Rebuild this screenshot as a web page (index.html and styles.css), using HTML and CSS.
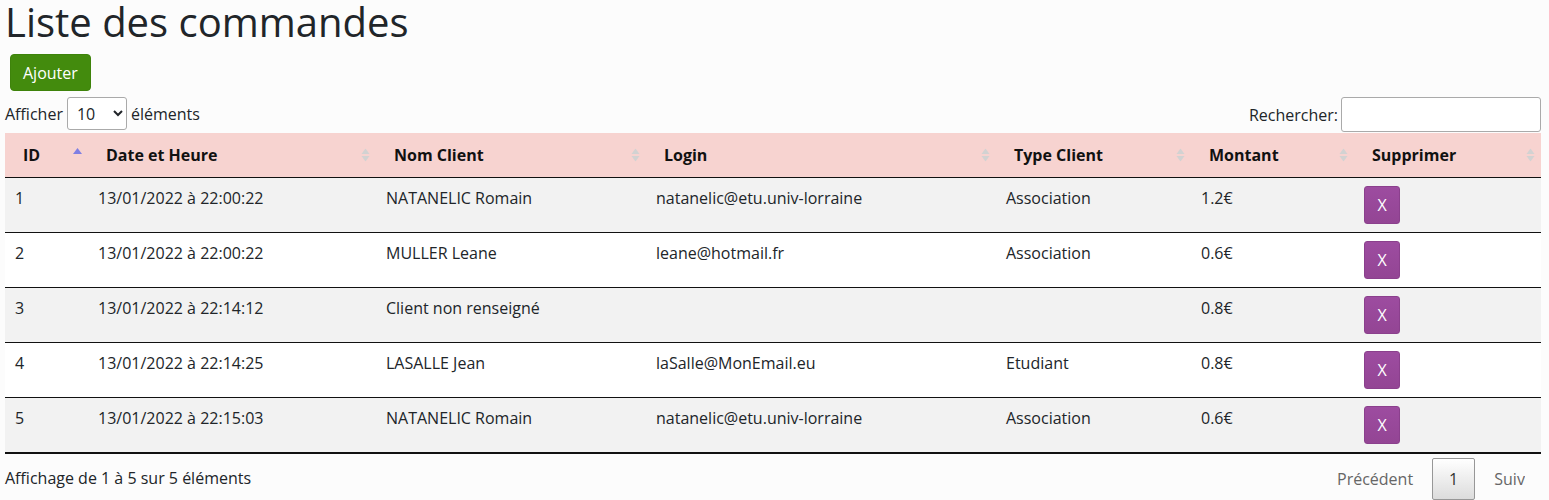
FILE: index.html
```html
<!DOCTYPE html>
<html lang="fr">
<head>
<meta charset="utf-8">
<title>Liste des commandes</title>
<link rel="stylesheet" href="styles.css">
</head>
<body>
<div class="page">
  <h1 class="title">Liste des commandes</h1>
  <button class="btn-add">Ajouter</button>

  <div class="controls">
    <label class="length">Afficher
      <select class="length-select"><option>10</option><option>25</option><option>50</option><option>100</option></select>
      éléments</label>
    <label class="search">Rechercher:<input class="search-input" type="search"></label>
  </div>

  <table class="grid">
    <colgroup>
      <col style="width:83px"><col style="width:288px"><col style="width:270px"><col style="width:350px"><col style="width:195px"><col style="width:163px"><col style="width:187px">
    </colgroup>
    <thead>
      <tr>
        <th>ID<span class="sort asc"><svg width="9" height="6" viewBox="0 0 9 6"><path d="M4.5 0 L9 6 L0 6 Z" fill="#7f7fe3"/></svg></span></th>
        <th>Date et Heure<span class="sort"><svg width="9" height="13" viewBox="0 0 9 13"><path d="M4.5 0 L8.5 5.5 L0.5 5.5 Z M4.5 13 L8.5 7.5 L0.5 7.5 Z" fill="#d2d2d2"/></svg></span></th>
        <th>Nom Client<span class="sort"><svg width="9" height="13" viewBox="0 0 9 13"><path d="M4.5 0 L8.5 5.5 L0.5 5.5 Z M4.5 13 L8.5 7.5 L0.5 7.5 Z" fill="#d2d2d2"/></svg></span></th>
        <th>Login<span class="sort"><svg width="9" height="13" viewBox="0 0 9 13"><path d="M4.5 0 L8.5 5.5 L0.5 5.5 Z M4.5 13 L8.5 7.5 L0.5 7.5 Z" fill="#d2d2d2"/></svg></span></th>
        <th>Type Client<span class="sort"><svg width="9" height="13" viewBox="0 0 9 13"><path d="M4.5 0 L8.5 5.5 L0.5 5.5 Z M4.5 13 L8.5 7.5 L0.5 7.5 Z" fill="#d2d2d2"/></svg></span></th>
        <th>Montant<span class="sort"><svg width="9" height="13" viewBox="0 0 9 13"><path d="M4.5 0 L8.5 5.5 L0.5 5.5 Z M4.5 13 L8.5 7.5 L0.5 7.5 Z" fill="#d2d2d2"/></svg></span></th>
        <th>Supprimer<span class="sort"><svg width="9" height="13" viewBox="0 0 9 13"><path d="M4.5 0 L8.5 5.5 L0.5 5.5 Z M4.5 13 L8.5 7.5 L0.5 7.5 Z" fill="#d2d2d2"/></svg></span></th>
      </tr>
    </thead>
    <tbody>
      <tr class="odd">
        <td>1</td><td>13/01/2022 à 22:00:22</td><td>NATANELIC Romain</td><td>natanelic@etu.univ-lorraine</td><td>Association</td><td>1.2€</td><td><button class="btn-del">X</button></td>
      </tr>
      <tr class="even">
        <td>2</td><td>13/01/2022 à 22:00:22</td><td>MULLER Leane</td><td>leane@hotmail.fr</td><td>Association</td><td>0.6€</td><td><button class="btn-del">X</button></td>
      </tr>
      <tr class="odd">
        <td>3</td><td>13/01/2022 à 22:14:12</td><td>Client non renseigné</td><td></td><td></td><td>0.8€</td><td><button class="btn-del">X</button></td>
      </tr>
      <tr class="even">
        <td>4</td><td>13/01/2022 à 22:14:25</td><td>LASALLE Jean</td><td>laSalle@MonEmail.eu</td><td>Etudiant</td><td>0.8€</td><td><button class="btn-del">X</button></td>
      </tr>
      <tr class="odd">
        <td>5</td><td>13/01/2022 à 22:15:03</td><td>NATANELIC Romain</td><td>natanelic@etu.univ-lorraine</td><td>Association</td><td>0.6€</td><td><button class="btn-del">X</button></td>
      </tr>
    </tbody>
  </table>

  <div class="footer">
    <div class="info">Affichage de 1 à 5 sur 5 éléments</div>
    <div class="paginate">
      <span class="page-btn disabled">Précédent</span><span class="page-btn current">1</span><span class="page-btn disabled">Suivant</span>
    </div>
  </div>
</div>
</body>
</html>
```

FILE: styles.css
```css
html, body {
  margin: 0;
  padding: 0;
  background: #fcfcfc;
}

body {
  font-family: "Open Sans", "Noto Sans", sans-serif;
  font-size: 16px;
  line-height: 1.5;
  color: #212529;
}

.page {
  margin: 0 8px 0 5px;
}

.title {
  margin: -6px 0 5px 0;
  font-size: 40px;
  font-weight: 400;
  line-height: 55px;
  color: #212529;
}

.btn-add {
  display: block;
  margin-left: 5px;
  height: 37px;
  padding: 0 12px;
  font-family: inherit;
  font-size: 16px;
  color: #fff;
  background: #438b0d;
  border: 1px solid #3e830b;
  border-radius: 4px;
}

.controls {
  display: flex;
  justify-content: space-between;
  align-items: flex-start;
  margin-top: 6px;
  height: 35px;
  margin-bottom: 1px;
}

.length {
  display: flex;
  align-items: center;
  gap: 4px;
  height: 33px;
}

.length-select {
  width: 60px;
  height: 33px;
  padding: 0 4px 0 5px;
  font-family: inherit;
  font-size: 16px;
  color: #212529;
  background: #fff;
  border: 1px solid #aaa;
  border-radius: 3px;
}

.search {
  display: flex;
  align-items: center;
  gap: 3px;
  height: 35px;
}

.search-input {
  box-sizing: border-box;
  width: 200px;
  height: 35px;
  padding: 4px;
  font-family: inherit;
  font-size: 16px;
  background: #fff;
  border: 1px solid #aaa;
  border-radius: 3px;
}

.grid {
  width: 1536px;
  table-layout: fixed;
  border-collapse: separate;
  border-spacing: 0;
  border-bottom: 1px solid #111;
}

.grid th {
  position: relative;
  height: 44px;
  box-sizing: border-box;
  padding: 10px 18px;
  text-align: left;
  font-weight: 700;
  color: #111;
  background: #f7d3d0;
  border-bottom: 1px solid #111;
  line-height: 24px;
}

.sort {
  position: absolute;
  right: 6px;
  top: 50%;
  display: flex;
  transform: translateY(-50%);
}

.sort.asc {
  transform: translateY(-100%);
  margin-top: -1px;
}

.grid td {
  padding: 8px 10px;
  vertical-align: top;
  border-bottom: 1px solid #111;
  color: #212529;
  height: 38px;
}

.grid tr.odd td {
  background: #f2f2f2;
}

.grid tr.even td {
  background: #fff;
}

.btn-del {
  display: block;
  width: 36px;
  height: 38px;
  padding: 0;
  font-family: inherit;
  font-size: 16px;
  color: #fff;
  background: linear-gradient(#9d4ca0, #934594);
  border: 1px solid #8b408d;
  border-radius: 3px;
}

.footer {
  display: flex;
  justify-content: space-between;
  align-items: flex-start;
}

.info {
  padding-top: 12px;
}

.paginate {
  margin-right: 16px;
  width: 205px;
  padding-top: 4px;
  white-space: nowrap;
  overflow: hidden;
  display: flex;
}

.page-btn {
  box-sizing: border-box;
  display: inline-block;
  padding: 8px 16px;
  margin-left: 2px;
  border: 1px solid transparent;
  border-radius: 2px;
  color: #666;
  min-width: 1.5em;
  text-align: center;
  flex: none;
}

.page-btn:first-child {
  margin-left: 0;
}

.page-btn.current {
  color: #333;
  border-color: #979797;
  background: linear-gradient(#fff, #dcdcdc);
}
```
